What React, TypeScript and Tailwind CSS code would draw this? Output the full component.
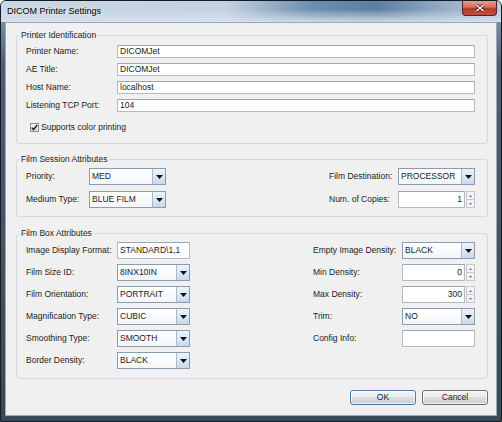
import React from 'react';

// DICOM Printer Settings dialog (Swing on Windows 7 look)

interface FieldProps {
  value?: string;
  className?: string;
}

const TextField: React.FC<FieldProps> = ({ value, className = '' }) => (
  <div className={`h-full flex items-center bg-white border border-[#b3b9c2] border-t-[#9ea5af] px-[2px] ${className}`}>
    <span className="truncate">{value}</span>
  </div>
);

const ComboBox: React.FC<FieldProps> = ({ value, className = '' }) => (
  <div className={`h-full flex border border-[#8a9cb1] bg-white ${className}`}>
    <div className="flex-1 flex items-center px-[2px] bg-[linear-gradient(to_bottom,#ffffff,#f3f5f8)]">
      {value}
    </div>
    <div className="w-[13px] flex items-center justify-center border-l border-[#a7b9cd] bg-[linear-gradient(to_bottom,#edf3f9_0%,#dde8f4_50%,#c7d8eb_100%)]">
      <svg width="7" height="4" viewBox="0 0 7 4">
        <path d="M0 0h7L3.5 4z" fill="#111" />
      </svg>
    </div>
  </div>
);

const Spinner: React.FC<FieldProps> = ({ value, className = '' }) => (
  <div className={`h-full flex ${className}`}>
    <div className="flex-1 flex items-center justify-end bg-white border border-[#b3b9c2] border-t-[#9ea5af] pr-[2px]">
      {value}
    </div>
    <div className="w-[9px] flex flex-col ml-[1px]">
      <div className="flex-1 flex items-center justify-center border border-[#c3c8ce] bg-[#f4f4f4]">
        <svg width="3" height="2" viewBox="0 0 3 2">
          <path d="M1.5 0L3 2H0z" fill="#6d6d6d" />
        </svg>
      </div>
      <div className="flex-1 flex items-center justify-center border border-t-0 border-[#c3c8ce] bg-[#f4f4f4]">
        <svg width="3" height="2" viewBox="0 0 3 2">
          <path d="M0 0h3L1.5 2z" fill="#6d6d6d" />
        </svg>
      </div>
    </div>
  </div>
);

const Group: React.FC<{ title: string; className?: string; children: React.ReactNode }> = ({
  title,
  className = '',
  children,
}) => (
  <fieldset className={`border border-[#d3d9de] rounded-[3px] ${className}`}>
    <legend className="ml-[2px] px-[2px] leading-[10px] text-[#222]">{title}</legend>
    {children}
  </fieldset>
);

const Button: React.FC<{ label: string; isDefault?: boolean }> = ({ label, isDefault }) => (
  <button
    className={`w-[66px] h-[15px] rounded-[3px] border leading-none text-[#222] shadow-[inset_0_0_0_1px_rgba(255,255,255,0.7)] bg-[linear-gradient(to_bottom,#f2f2f2_0%,#ebebeb_50%,#dddddd_50%,#cfcfcf_100%)] ${
      isDefault ? 'border-[#4f79a6]' : 'border-[#707070]'
    }`}
  >
    {label}
  </button>
);

export default function App() {
  const identRows = [
    ['Printer Name:', 'DICOMJet'],
    ['AE Title:', 'DICOMJet'],
    ['Host Name:', 'localhost'],
    ['Listening TCP Port:', '104'],
  ];

  return (
    <div className="w-[502px] h-[422px] flex flex-col overflow-hidden rounded-t-[6px] border border-[#151c24] bg-[linear-gradient(to_bottom,#8ea4ba_0%,#4f5f70_15%,#3a4755_100%)] font-['Liberation_Sans',Arial,sans-serif] text-[8.5px] text-[#222]">
      {/* Title bar */}
      <div className="h-[21px] shrink-0 flex justify-between bg-[linear-gradient(to_bottom,rgba(255,255,255,0)_40%,rgba(214,226,238,0.9)_100%),linear-gradient(to_right,#c9d6e3_0%,#c4d2e0_45%,#6f8fb1_62%,#5d7ea3_75%,#92abc5_88%,#b9cadb_100%)]">
        <span className="self-center pl-[6px] pt-[1px] text-[9px] text-black [text-shadow:0_0_5px_rgba(255,255,255,0.95)]">
          DICOM Printer Settings
        </span>
        <div className="mr-[4px] w-[35px] h-[15px] flex items-center justify-center rounded-b-[4px] border border-t-0 border-[#5a2020] bg-[linear-gradient(to_bottom,#e3a091_0%,#cf6c58_45%,#b8372a_55%,#c4503c_100%)]">
          <svg width="10" height="8" viewBox="0 0 10 8">
            <path d="M1.5 1l7 6M8.5 1l-7 6" stroke="#3b1a16" strokeWidth="3" />
            <path d="M1.5 1l7 6M8.5 1l-7 6" stroke="#fff" strokeWidth="1.6" />
          </svg>
        </div>
      </div>

      {/* Client area */}
      <div className="h-[394px] shrink-0 mx-[4px] border border-[#9aa7b4] bg-[#f0f0f0] pt-[7px] pl-[10px] pr-[8px] flex flex-col">
        <Group title="Printer Identification">
          <div className="pt-[5px] pl-[9px] pr-[12px] pb-[11px] flex flex-col">
            <div className="flex flex-col gap-[5px]">
              {identRows.map(([label, value]) => (
                <div key={label} className="h-[13px] flex items-center">
                  <span className="w-[91px] shrink-0">{label}</span>
                  <TextField value={value} className="flex-1" />
                </div>
              ))}
            </div>
            <div className="mt-[10px] h-[10px] flex items-center">
              <div className="ml-[4px] w-[9px] h-[9px] flex items-center justify-center border border-[#8e8f8f] bg-[linear-gradient(to_bottom,#f6f6f6,#dedede)]">
                <svg width="7" height="7" viewBox="0 0 7 7">
                  <path d="M0.8 3.6l1.8 2L6.2 0.9" stroke="#111" strokeWidth="1.4" fill="none" />
                </svg>
              </div>
              <span className="ml-[2px]">Supports color printing</span>
            </div>
          </div>
        </Group>

        <Group title="Film Session Attributes" className="mt-[10px]">
          <div className="pt-[4px] pl-[9px] pr-[12px] pb-[8px] flex justify-between">
            <div className="flex flex-col gap-[6px]">
              <div className="h-[17px] flex items-center">
                <span className="w-[63px]">Priority:</span>
                <ComboBox value="MED" className="w-[77px]" />
              </div>
              <div className="h-[17px] flex items-center">
                <span className="w-[63px]">Medium Type:</span>
                <ComboBox value="BLUE FILM" className="w-[77px]" />
              </div>
            </div>
            <div className="flex flex-col gap-[6px]">
              <div className="h-[17px] flex items-center">
                <span className="w-[69px]">Film Destination:</span>
                <ComboBox value="PROCESSOR" className="w-[77px]" />
              </div>
              <div className="h-[17px] flex items-center">
                <span className="w-[69px]">Num. of Copies:</span>
                <Spinner value="1" className="w-[77px]" />
              </div>
            </div>
          </div>
        </Group>

        <Group title="Film Box Attributes" className="mt-[11px]">
          <div className="pt-[4px] pl-[9px] pr-[12px] pb-[9px] flex justify-between">
            <div className="flex flex-col gap-[5px]">
              <div className="h-[17px] flex items-center">
                <span className="w-[91px]">Image Display Format:</span>
                <TextField value={'STANDARD\\1,1'} className="w-[73px]" />
              </div>
              <div className="h-[17px] flex items-center">
                <span className="w-[91px]">Film Size ID:</span>
                <ComboBox value="8INX10IN" className="w-[73px]" />
              </div>
              <div className="h-[17px] flex items-center">
                <span className="w-[91px]">Film Orientation:</span>
                <ComboBox value="PORTRAIT" className="w-[73px]" />
              </div>
              <div className="h-[17px] flex items-center">
                <span className="w-[91px]">Magnification Type:</span>
                <ComboBox value="CUBIC" className="w-[73px]" />
              </div>
              <div className="h-[17px] flex items-center">
                <span className="w-[91px]">Smoothing Type:</span>
                <ComboBox value="SMOOTH" className="w-[73px]" />
              </div>
              <div className="h-[17px] flex items-center">
                <span className="w-[91px]">Border Density:</span>
                <ComboBox value="BLACK" className="w-[73px]" />
              </div>
            </div>
            <div className="flex flex-col gap-[5px]">
              <div className="h-[17px] flex items-center">
                <span className="w-[89px]">Empty Image Density:</span>
                <ComboBox value="BLACK" className="w-[73px]" />
              </div>
              <div className="h-[17px] flex items-center">
                <span className="w-[89px]">Min Density:</span>
                <Spinner value="0" className="w-[73px]" />
              </div>
              <div className="h-[17px] flex items-center">
                <span className="w-[89px]">Max Density:</span>
                <Spinner value="300" className="w-[73px]" />
              </div>
              <div className="h-[17px] flex items-center">
                <span className="w-[89px]">Trim:</span>
                <ComboBox value="NO" className="w-[73px]" />
              </div>
              <div className="h-[17px] flex items-center">
                <span className="w-[89px]">Config Info:</span>
                <TextField className="w-[73px]" />
              </div>
            </div>
          </div>
        </Group>

        <div className="mt-[11px] flex justify-end gap-[6px]">
          <Button label="OK" isDefault />
          <Button label="Cancel" />
        </div>
      </div>
    </div>
  );
}
